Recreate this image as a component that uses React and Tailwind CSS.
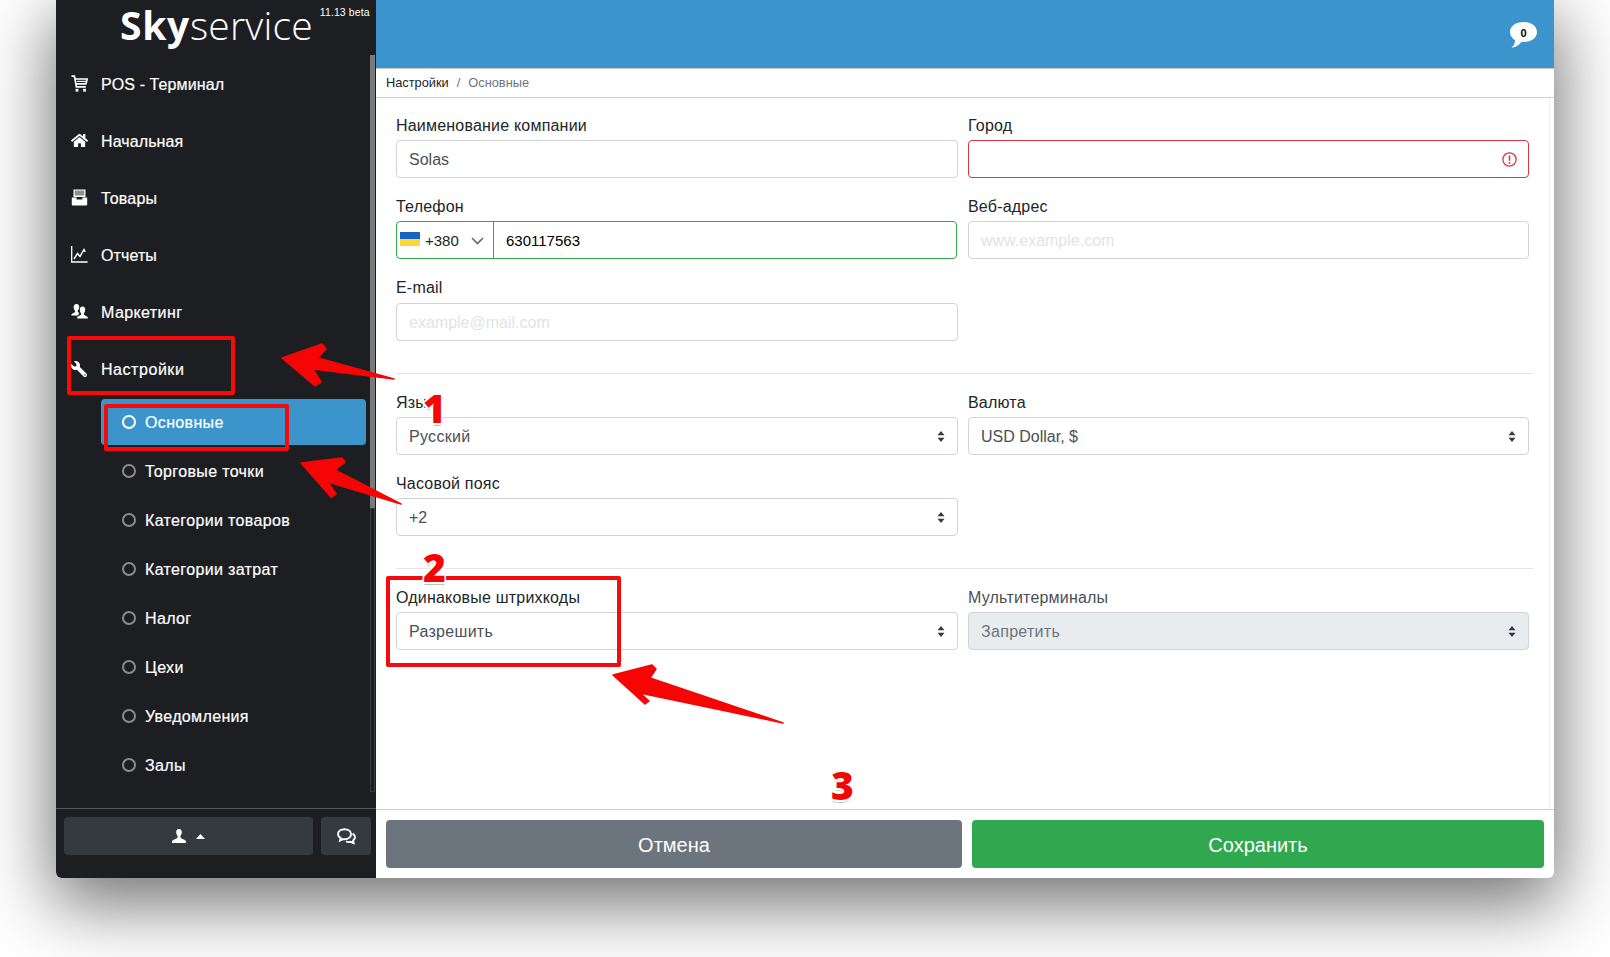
import React from "react";
import { FaHome, FaWrench } from "react-icons/fa";

const font = { fontFamily: '"Liberation Sans", Arial, sans-serif' };

const Cart = () => (
  <svg width="17" height="17" viewBox="0 0 17 17" fill="none" stroke="white">
    <path d="M0.5 1.2H3.4L5.4 11.8H14.8" strokeWidth="1.7" />
    <path d="M4 4H16.2L15 8.9H5" strokeWidth="1.6" />
    <path d="M6 6.4H15" strokeWidth="1.2" />
    <rect x="4.6" y="13.8" width="2.8" height="2.8" fill="white" stroke="none" />
    <rect x="12.2" y="13.8" width="2.8" height="2.8" fill="white" stroke="none" />
  </svg>
);
const Box = () => (
  <svg width="17" height="17" viewBox="0 0 17 17" fill="white">
    <path d="M2.5 0.5H14.5V8H2.5ZM3.7 1.7V2.6H13.3V1.7ZM3.7 3.6V4.4H13.3V3.6ZM3.7 5.4V6.2H13.3V5.4Z" fillRule="evenodd" />
    <path d="M0.8 8.6H5.6V10.4H11.4V8.6H16.2V15.4Q16.2 16.4 15.2 16.4H1.8Q0.8 16.4 0.8 15.4Z" />
  </svg>
);
const Chart = () => (
  <svg width="17" height="17" viewBox="0 0 17 17" fill="none" stroke="white">
    <path d="M0.7 0V16H16.6" strokeWidth="1.3" />
    <path d="M3 13L6.5 7.5L9 10.5L13 3.5L14.2 6" strokeWidth="1.4" />
  </svg>
);
const Users = () => (
  <svg width="17" height="17" viewBox="0 0 17 17" fill="white">
    <path d="M5.5 1C7.6 1 8.5 2.6 8.2 4.6C8 6 7.4 7 6.8 7.6V9L8.4 9.9C7.6 10.6 7.4 11.4 7.2 12.5H0.4V11.6C0.8 10.6 3 10.2 4 9V7.6C3.2 7 2.8 5.8 2.7 4.4C2.5 2.4 3.6 1 5.5 1Z" />
    <path d="M11.5 3.6C13.4 3.6 14.4 5 14.2 7C14 8.4 13.6 9.6 12.9 10.2V11.4C13.9 12.6 16.2 13 16.8 14.2V15.6H6.2V14.2C6.8 13 9.1 12.6 10.1 11.4V10.2C9.4 9.6 9 8.4 8.8 7C8.6 5 9.6 3.6 11.5 3.6Z" />
  </svg>
);
const Person = () => (
  <svg width="14" height="14" viewBox="0 0 14 14" fill="white">
    <path d="M7 0C9 0 10 1.5 9.8 3.6C9.6 5.2 9.1 6.4 8.4 7V8.6C9.4 10 13 10.5 14 12.2V14H0V12.2C1 10.5 4.6 10 5.6 8.6V7C4.9 6.4 4.4 5.2 4.2 3.6C4 1.5 5 0 7 0Z" />
  </svg>
);
const Chat = () => (
  <svg width="19" height="17" viewBox="0 0 19 17" fill="none" stroke="white" strokeWidth="1.9">
    <path d="M7.5 1.2C11.2 1.2 14 3.3 14 6.2C14 9.1 11.2 11.2 7.5 11.2C7 11.2 6.5 11.2 6 11.1L3 12.6L3.6 9.9C2 9 1 7.7 1 6.2C1 3.3 3.8 1.2 7.5 1.2Z" />
    <path d="M15.6 5.6C17.2 6.6 18 7.8 18 9.2C18 10.5 17.3 11.6 16.1 12.5L16.6 15.2L13.6 13.8C12 14.2 10.4 14 9 13.4" />
  </svg>
);
const Arrows = () => (
  <svg width="8" height="11" viewBox="0 0 8 11" fill="#343a40">
    <path d="M4 0L7.5 4.2H0.5Z" />
    <path d="M4 11L7.5 6.8H0.5Z" />
  </svg>
);

const navItems = [
  { icon: <Cart />, label: "POS - Терминал", t: "tracking-[0.1px]" },
  { icon: <FaHome size={17} color="white" />, label: "Начальная", t: "tracking-[0.1px]" },
  { icon: <Box />, label: "Товары", t: "tracking-[0.2px]" },
  { icon: <Chart />, label: "Отчеты", t: "tracking-[0.1px]" },
  { icon: <Users />, label: "Маркетинг", t: "tracking-[0.4px]" },
  { icon: <FaWrench size={16} color="white" className="-scale-x-100" />, label: "Настройки", t: "tracking-[0.55px]" },
];
const subItems = ["Основные", "Торговые точки", "Категории товаров", "Категории затрат", "Налог", "Цехи", "Уведомления", "Залы"];

const Label = ({ children, muted, up }) => (
  <label className={`block h-[24px] mb-[3px] text-[16px] tracking-[0.2px] ${up ? "leading-[24px]" : "leading-[26px]"} ${muted ? "text-[#495057]" : "text-[#212529]"}`}>{children}</label>
);
const Input = ({ value, placeholder }) => (
  <div className="h-[38px] px-[12px] flex items-center rounded-[4px] border border-[#ced4da] text-[16px] bg-white">
    {value ? <span className="mt-[2px] text-[#495057]">{value}</span> : <span className="mt-[2px] text-[#e2e3e5]">{placeholder}</span>}
  </div>
);
const Select = ({ value, disabled, cyr }) => (
  <div className={`h-[38px] pl-[12px] pr-[12px] flex items-center justify-between rounded-[4px] border border-[#ced4da] text-[16px] ${disabled ? "bg-[#e9ecef] text-[#6c757d]" : "bg-white text-[#495057]"}`}>
    <span className={`mt-[2px] ${cyr ? "tracking-[0.3px]" : ""}`}>{value}</span>
    <Arrows />
  </div>
);
const Field = ({ label, children, muted, wide, up }) => (
  <div className={wide ? "mb-[17px]" : "mb-[16px]"}>
    <Label muted={muted} up={up}>{label}</Label>
    {children}
  </div>
);
const Grid = ({ children }) => <div className="grid grid-cols-[562px_561px] gap-x-[10px]">{children}</div>;
const Hr = () => <div className="h-px bg-[#e3e5e8] mt-[16px] mb-[16px]" />;

export default function App() {
  return (
    <div className="relative h-[957px] w-[1610px] overflow-hidden bg-white pl-[56px]" style={font}>
      <div className="flex h-[878px] w-[1498px] rounded-b-[6px] bg-white shadow-[0_22px_70px_4px_rgba(0,0,0,0.56)] overflow-hidden">
        {/* Sidebar */}
        <aside className="flex w-[320px] shrink-0 flex-col bg-[#1c1e22] text-white">
          <div className="flex h-[55px] items-start pl-[64px]">
            <div className="flex items-baseline text-[39px] leading-[50px] text-white" style={{ fontFamily: '"Open Sans", sans-serif' }}>
              <span className="font-bold tracking-[0.7px]">Sky</span>
              <span className="font-light tracking-[0.2px]">service</span>
            </div>
            <span className="ml-[7px] mt-[6px] text-[10.5px] leading-[13px] whitespace-nowrap tracking-[0.1px]">11.13 beta</span>
          </div>
          <div className="flex h-[737px] mb-[16px] pr-px">
            <nav className="flex-1">
              {navItems.map((n) => (
                <div key={n.label} className="flex h-[57px] items-center pl-[15px] text-[16px]">
                  <span className="flex w-[30px] items-center">{n.icon}</span>
                  <span className={`mt-[2px] ${n.t} [-webkit-text-stroke:0.2px_white]`}>{n.label}</span>
                </div>
              ))}
              <div className="pl-[45px] pr-[4px] pt-[2px]">
                {subItems.map((s, i) => (
                  <div key={s} className={`mb-[3px] flex h-[46px] items-center rounded-[4px] pl-[21px] text-[16px] ${i === 0 ? "bg-[#3c94cd]" : ""}`}>
                    <span className={`mr-[9px] h-[14px] w-[14px] rounded-full border-2 ${i === 0 ? "border-white" : "border-[#8a8b8d]"}`} />
                    <span className="mt-[2px] tracking-[0.35px] [-webkit-text-stroke:0.2px_white]">{s}</span>
                  </div>
                ))}
              </div>
            </nav>
            <div className="flex w-[5px] shrink-0 flex-col">
              <div className="h-[453px] bg-[#77797b]" />
              <div className="flex-1 border border-[#3a3c40]" />
            </div>
          </div>
          <div className="flex h-[70px] gap-[8px] border-t border-[#55575a] pl-[8px] pr-[5px] pt-[8px]">
            <div className="flex h-[38px] flex-1 items-center justify-center gap-[10px] rounded-[4px] bg-[#343a40]">
              <Person />
              <svg width="9" height="5" viewBox="0 0 9 5" fill="white"><path d="M4.5 0L9 5H0Z" /></svg>
            </div>
            <div className="flex h-[38px] w-[50px] items-center justify-center rounded-[4px] bg-[#343a40]">
              <Chat />
            </div>
          </div>
        </aside>

        {/* Main */}
        <main className="flex min-w-0 flex-1 flex-col">
          <header className="flex h-[69px] shrink-0 items-start justify-end border-b border-[#c9c9c9] bg-[#3c94cd] pr-[17px] pt-[22px]">
            <div className="relative h-[26px] w-[27px]">
              <svg width="27" height="26" viewBox="0 0 27 26" fill="white">
                <path d="M13.5 0C21 0 27 4 27 10C27 16 21 20 13.5 20C12.8 20 12 20 11.3 19.9C9 23 5 25.5 1.5 25.5C4 23.5 5 21 5 18.2C2 16.2 0 13.3 0 10C0 4 6 0 13.5 0Z" />
              </svg>
              <span className="absolute left-0 right-0 top-[5px] text-center text-[11px] font-bold leading-[13px] text-black">0</span>
            </div>
          </header>
          <div className="flex h-[29px] shrink-0 items-center gap-[8px] border-b border-[#cfcfcf] pl-[10px] text-[12.8px]">
            <span className="text-[#212529]">Настройки</span>
            <span className="text-[#6c757d]">/</span>
            <span className="text-[#6c757d]">Основные</span>
          </div>
          <div className="flex min-h-0 flex-1">
            <div className="flex-1 pl-[20px] pr-[16px] pt-[15px]">
              <Grid>
                <Field label="Наименование компании"><Input value="Solas" /></Field>
                <Field label="Город">
                  <div className="flex h-[38px] items-center justify-end rounded-[4px] border border-[#dc3545] pr-[11px]">
                    <svg width="15" height="15" viewBox="0 0 15 15" fill="none" stroke="#dc3545">
                      <circle cx="7.5" cy="7.5" r="6.6" strokeWidth="1.3" />
                      <path d="M7.5 3.5V8.8" strokeWidth="1.6" />
                      <circle cx="7.5" cy="11" r="1" fill="#dc3545" stroke="none" />
                    </svg>
                  </div>
                </Field>
                <Field label="Телефон" wide>
                  <div className="flex h-[38px] w-[561px] items-center rounded-[4px] border border-[#33a84c] text-[15px] text-[#212529]">
                    <div className="flex h-full w-[97px] shrink-0 items-center border-r border-[#33a84c] pl-[3px]">
                      <div className="mb-[2px] flex h-[14px] w-[20px] flex-col">
                        <div className="h-[7px] bg-[#1565c0]" />
                        <div className="h-[7px] bg-[#fdd835]" />
                      </div>
                      <span className="ml-[5px] mt-[2px] text-[#212529]">+380</span>
                      <svg className="ml-[12px] mt-[2px]" width="13" height="8" viewBox="0 0 13 8" fill="none" stroke="#666" strokeWidth="1.6"><path d="M1 1L6.5 6.5L12 1" /></svg>
                    </div>
                    <span className="mt-[2px] pl-[12px] text-[15px] text-black">630117563</span>
                  </div>
                </Field>
                <Field label="Веб-адрес" wide><Input placeholder="www.example.com" /></Field>
                <Field label="E-mail" up><Input placeholder="example@mail.com" /></Field>
              </Grid>
              <Hr />
              <Grid>
                <Field label="Язык"><Select value="Русский" cyr /></Field>
                <Field label="Валюта"><Select value="USD Dollar, $" /></Field>
                <Field label="Часовой пояс"><Select value="+2" /></Field>
              </Grid>
              <Hr />
              <Grid>
                <Field label="Одинаковые штрихкоды"><Select value="Разрешить" cyr /></Field>
                <Field label="Мультитерминалы" muted><Select value="Запретить" disabled cyr /></Field>
              </Grid>
            </div>
            <div className="w-[5px] shrink-0 border-l border-[#efefef]" />
          </div>
          <footer className="flex h-[69px] shrink-0 gap-[10px] border-t border-[#cfcfcf] pl-[10px] pr-[10px] pt-[10px]">
            <div className="flex h-[48px] w-[576px] items-center justify-center rounded-[4px] bg-[#6c757d] pt-[1px] text-[20px] text-white">Отмена</div>
            <div className="flex h-[48px] flex-1 items-center justify-center rounded-[4px] bg-[#2fa84f] pt-[1px] text-[20px] text-white">Сохранить</div>
          </footer>
        </main>
      </div>

      {/* Annotations */}
      <div className="absolute left-[67px] top-[336px] h-[59px] w-[168px] rounded-[2px] border-[4px] border-[#f60a0a]" />
      <div className="absolute left-[104px] top-[404px] h-[47px] w-[185px] rounded-[2px] border-[4px] border-[#f60a0a]" />
      <div className="absolute left-[386px] top-[576px] h-[91px] w-[235px] rounded-[2px] border-[4px] border-[#f60a0a]" />
      <svg className="absolute left-0 top-0" width="1610" height="957" fill="#f60505" stroke="#f60505" strokeWidth="1.5" strokeLinejoin="round">
        <path d="M394 379L318 358L326 349L322 344L282 358L315 386L321 382L313 369Z" />
        <path d="M401 504L335 470L345 462L342 458L301 463L331 497L336 494L328 482Z" />
        <path d="M783 723L650 678L656 669L652 665L613 675L645 704L649 701L640 693Z" />
      </svg>
      {[
        ["1", "left-[423px] top-[382px]"],
        ["2", "left-[423px] top-[541px]"],
        ["3", "left-[831px] top-[759px]"],
      ].map(([t, c]) => (
        <span key={t} className={`absolute ${c} text-[39px] font-extrabold leading-[52px] text-[#f60505] [font-family:'Open_Sans',sans-serif] [text-shadow:1.5px_1.5px_0_#fff,-1.5px_1.5px_0_#fff,1.5px_-1.5px_0_#fff,-1.5px_-1.5px_0_#fff,0_3px_1px_#bbb]`}>{t}</span>
      ))}
    </div>
  );
}
